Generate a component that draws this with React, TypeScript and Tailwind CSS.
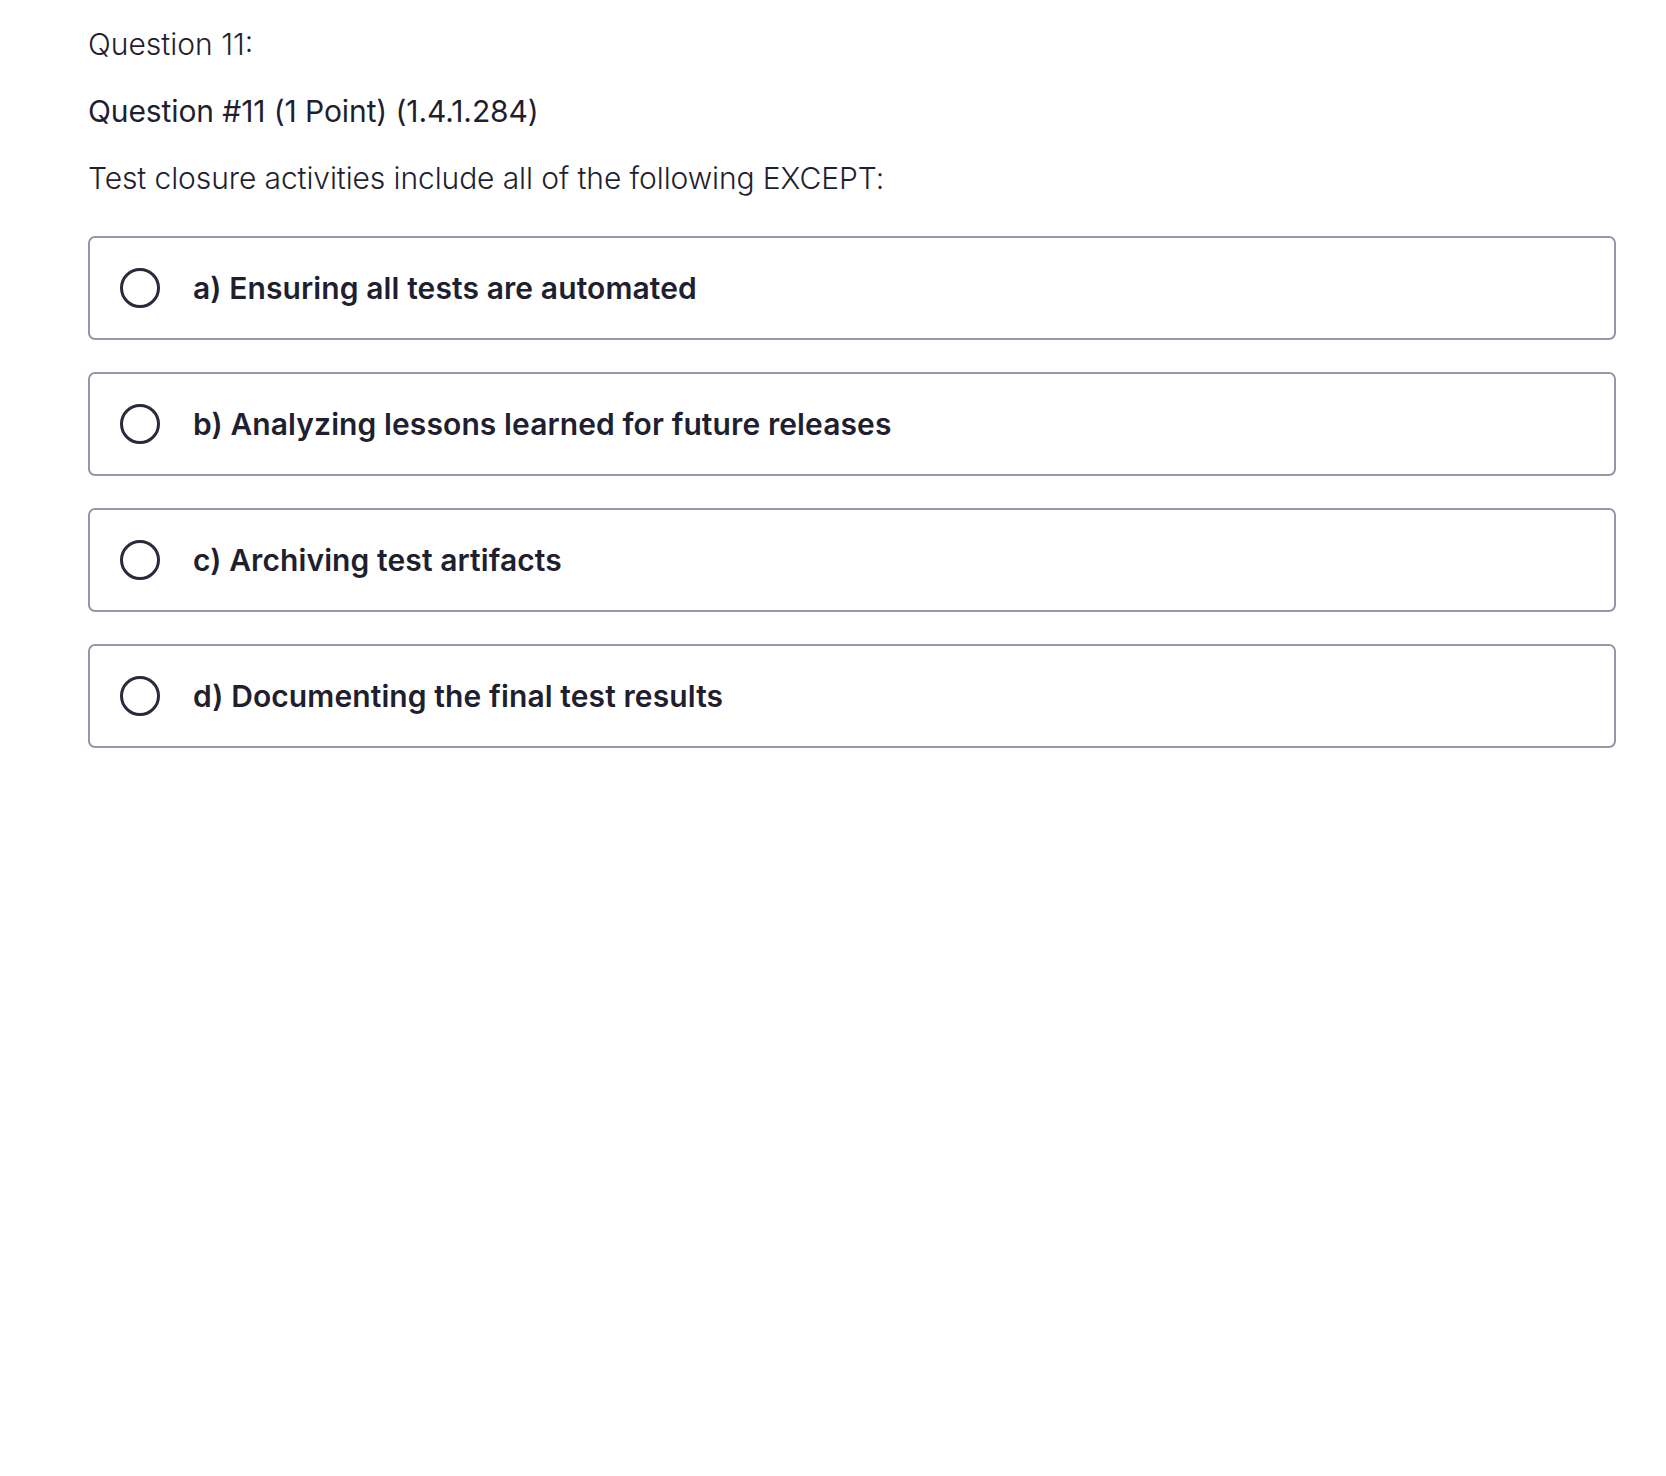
const options = [
  "a) Ensuring all tests are automated",
  "b) Analyzing lessons learned for future releases",
  "c) Archiving test artifacts",
  "d) Documenting the final test results",
];

function Radio() {
  return (
    <span className="flex h-[40px] w-[40px] shrink-0 items-center justify-center rounded-full border-[3px] border-[#2a2a3c]" />
  );
}

export default function App() {
  return (
    <div
      className="min-h-screen bg-white pl-[88px] pr-[50px] pt-[24px] text-[#1f1f30]"
      style={{ fontFamily: "Inter, 'Noto Sans', sans-serif" }}
    >
      <p className="text-[30px] font-light leading-[40px]">Question 11:</p>
      <p className="mt-[27px] text-[30px] font-normal leading-[40px] tracking-[-0.1px]">
        Question #11 (1 Point) (1.4.1.284)
      </p>
      <p className="mt-[27px] text-[30px] font-light leading-[40px] tracking-[-0.1px]">
        Test closure activities include all of the following EXCEPT:
      </p>
      <div className="mt-[38px] flex flex-col gap-[32px]">
        {options.map((o) => (
          <label
            key={o}
            className="flex h-[104px] items-center gap-[33px] rounded-[7px] border-2 border-[#9597ab] pl-[30px]"
          >
            <Radio />
            <span className="text-[30px] font-semibold tracking-[0.1px]">{o}</span>
          </label>
        ))}
      </div>
    </div>
  );
}
